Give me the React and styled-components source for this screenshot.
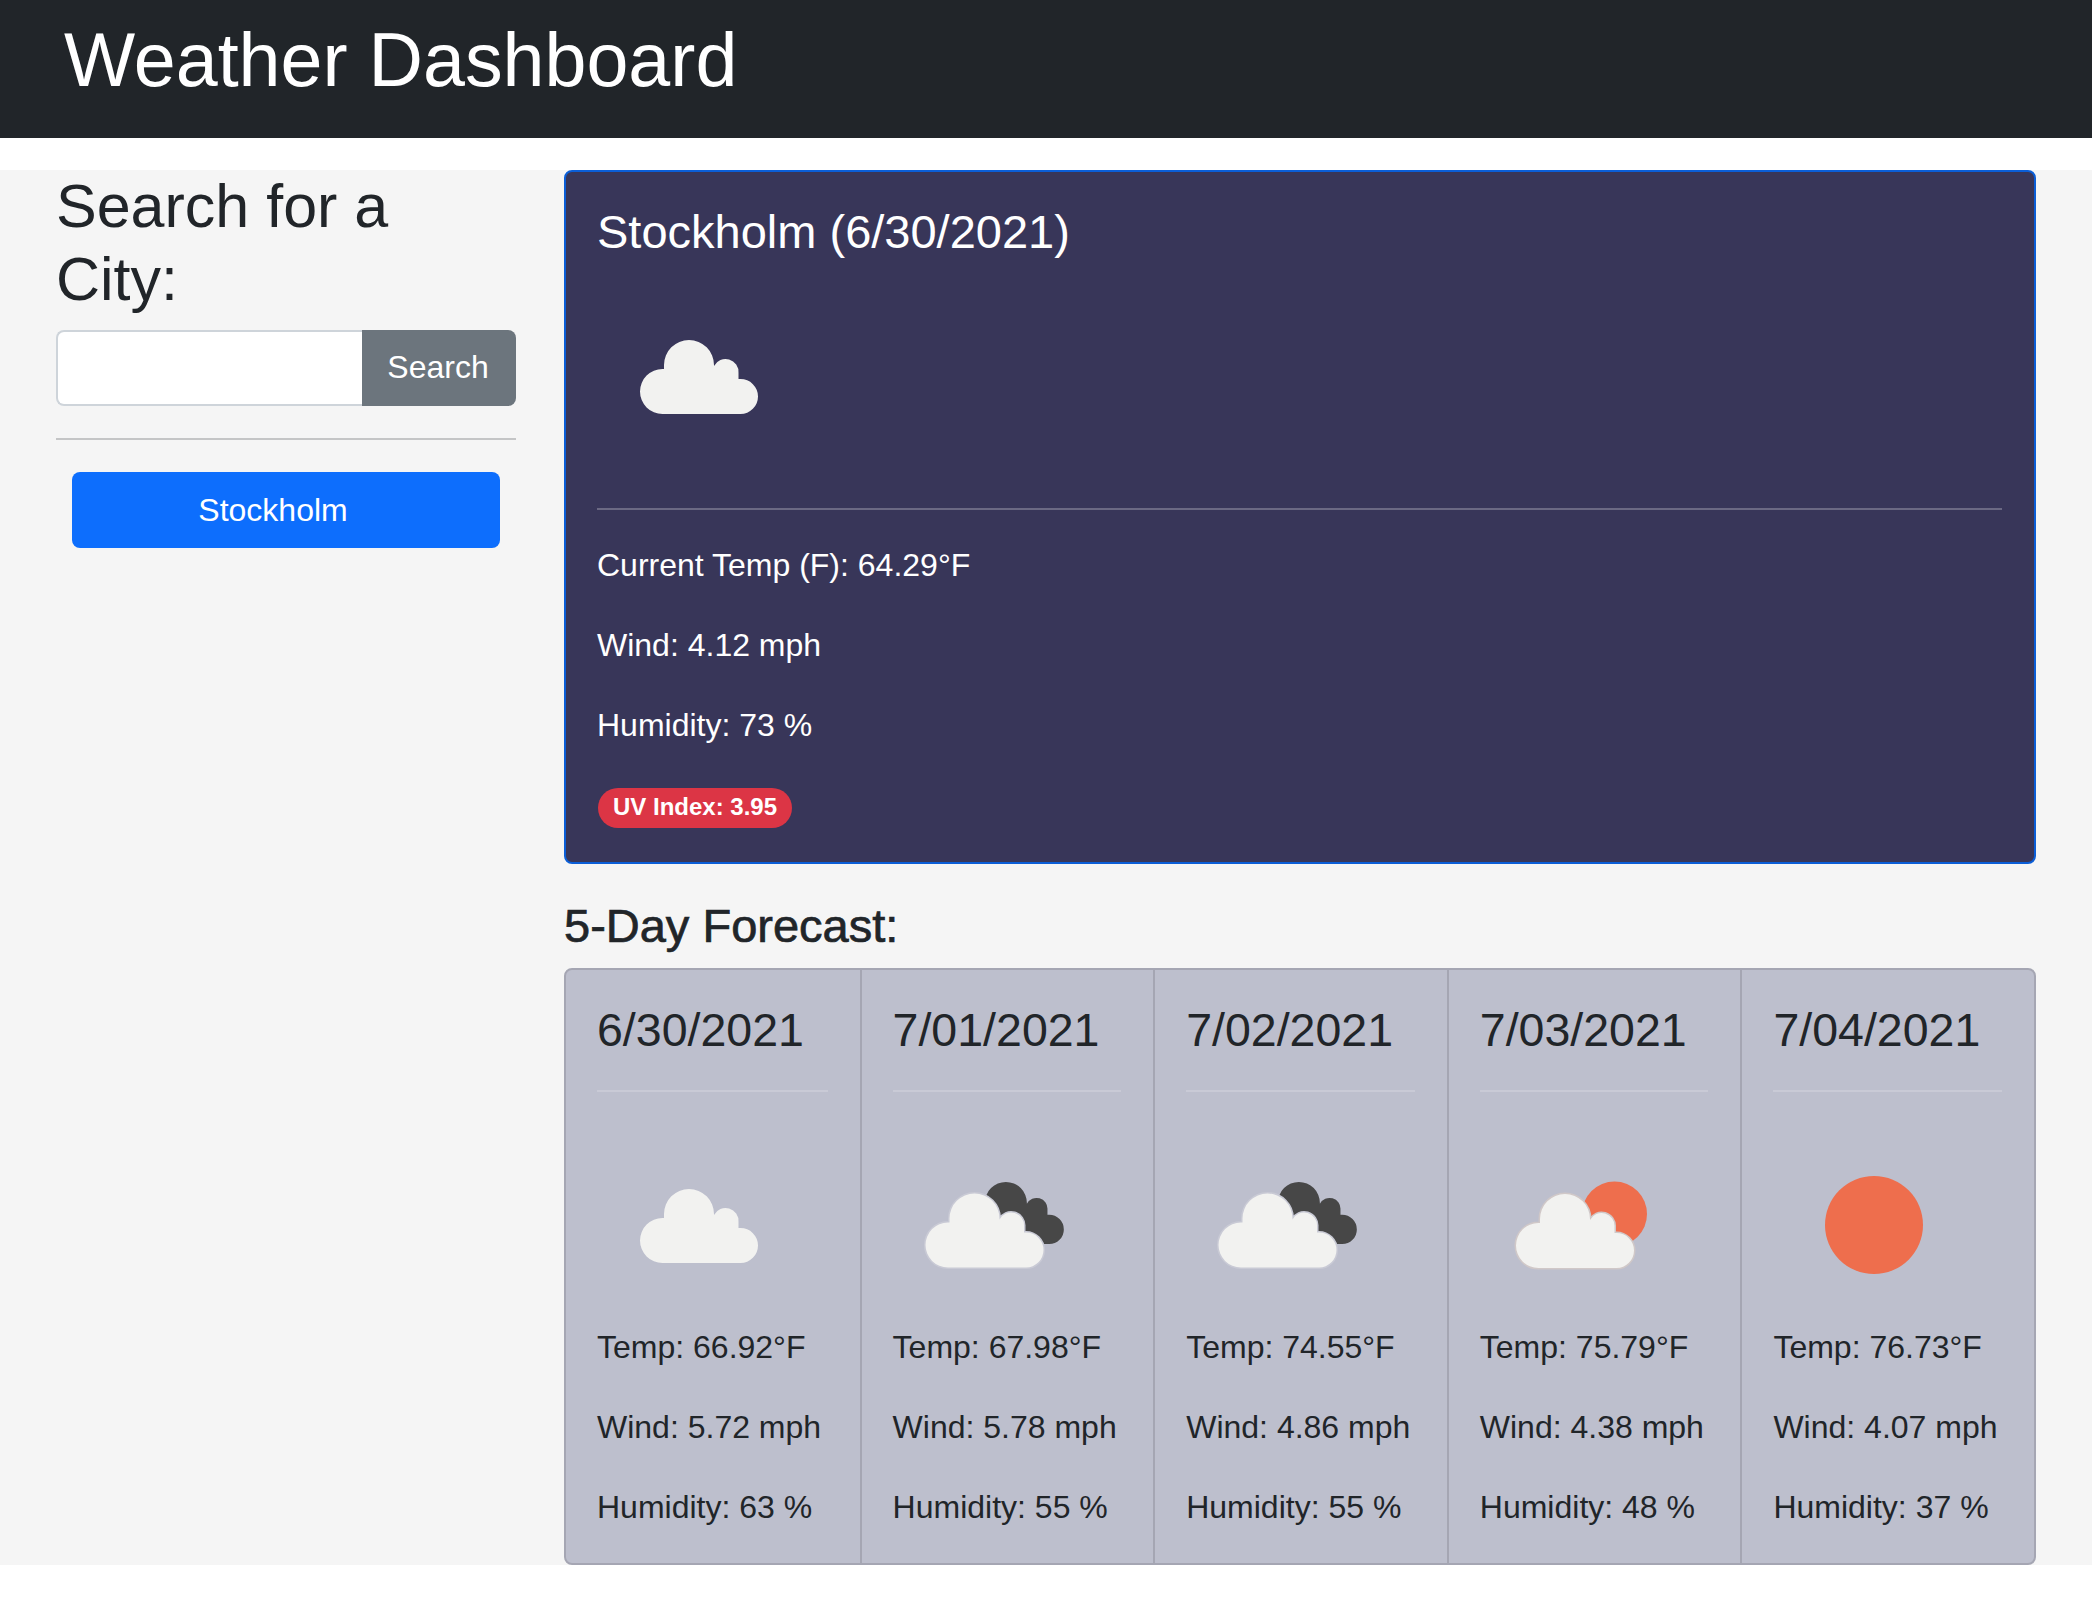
import React from "react";
import styled, { createGlobalStyle } from "styled-components";

const GlobalStyle = createGlobalStyle`
  * {
    box-sizing: border-box;
  }
  body {
    margin: 0;
    background: #fff;
    color: #212529;
    font-family: "Liberation Sans", Arial, sans-serif;
    font-size: 32px;
    line-height: 48px;
  }
`;

const Header = styled.header`
  height: 138px;
  padding: 15px 0 0 64px;
  background: #212529;
`;

const Title = styled.h1`
  margin: 0;
  color: #fff;
  font-size: 75.4px;
  font-weight: 400;
  line-height: 90.5px;
`;

const Page = styled.main`
  display: grid;
  grid-template-columns: 460px 1fr;
  column-gap: 48px;
  margin-top: 32px;
  padding: 0 56px;
  background: #f5f5f5;
`;

const Sidebar = styled.aside`
  display: flex;
  flex-direction: column;
`;

const SearchTitle = styled.h2`
  margin: 0 0 13px;
  font-size: 61px;
  font-weight: 400;
  line-height: 73.4px;
`;

const SearchGroup = styled.form`
  display: flex;
  height: 76px;
`;

const SearchInput = styled.input`
  flex: 1;
  min-width: 0;
  border: 2px solid #ced4da;
  border-right: 0;
  border-radius: 8px 0 0 8px;
  background: #fff;
  font: inherit;
`;

const SearchButton = styled.button`
  width: 154px;
  padding: 0 2px 2px 0;
  border: 0;
  border-radius: 0 8px 8px 0;
  background: #6c757d;
  color: #fff;
  font: inherit;
`;

const Rule = styled.hr`
  height: 2px;
  margin: ${(p) => p.$margin};
  border: 0;
  background: ${(p) => p.$color};
`;

const CityButton = styled.button`
  height: 76px;
  margin: 0 16px;
  padding: 1px 26px 0 0;
  border: 0;
  border-radius: 8px;
  background: #0d6efd;
  color: #fff;
  font: inherit;
`;

const Content = styled.section`
  min-width: 0;
`;

const CurrentCard = styled.article`
  height: 694px;
  padding: 32px 32px 32px 31px;
  border: 2px solid #0b5ed7;
  border-radius: 8px;
  background: #383659;
  color: #fff;
`;

const CardTitle = styled.h4`
  margin: 0 0 16px;
  font-size: 47px;
  font-weight: 400;
  line-height: 56.4px;
`;

const Text = styled.p`
  margin: 0 0 32px;
  white-space: nowrap;
`;

const Badge = styled.span`
  display: inline-block;
  height: 40px;
  margin: 7px 0 0 1px;
  padding: 0 15px;
  border-radius: 20px;
  background: #dc3545;
  color: #fff;
  font-size: 24px;
  font-weight: 700;
  line-height: 38px;
  vertical-align: top;
`;

const ForecastTitle = styled.h4`
  margin: 34px 0 14px;
  font-size: 47px;
  font-weight: 400;
  line-height: 56.4px;
  -webkit-text-stroke: 0.7px #212529;
`;

const ForecastGroup = styled.div`
  display: grid;
  grid-template-columns: repeat(5, 1fr);
  border: 2px solid #a5a6b3;
  border-radius: 8px;
  background: #bdbfcd;
`;

const DayCard = styled.article`
  min-width: 0;
  padding: 32px 32px 0 31px;
  & + & {
    border-left: 2px solid #a5a6b3;
  }
  svg {
    margin-bottom: -2px;
  }
  p:last-child {
    margin-bottom: 32px;
  }
`;

const DayTitle = styled.h4`
  margin: 0 0 31px;
  font-size: 46.5px;
  font-weight: 400;
  line-height: 56.4px;
`;

const IconBox = styled.svg`
  display: block;
  width: 200px;
  height: 200px;
`;

const CLOUD_PATH =
  "M65.5 138A22.5 22.5 0 0 1 65.5 93H67V89A25 25 0 0 1 117 89V90A13 13 0 0 1 141.5 97V103H143.5A17.5 17.5 0 0 1 143.5 138Z";
const CLOUD_WHITE = "#f2f2f0";

const Cloud = ({ fill, transform, edge }) => (
  <path
    d={CLOUD_PATH}
    fill={fill}
    transform={transform}
    stroke={edge}
    strokeWidth={edge ? 3 : 0}
    paintOrder="stroke"
  />
);

const WeatherIcon = ({ kind }) => (
  <IconBox viewBox="0 0 200 200">
    {kind === "clouds" && <Cloud fill={CLOUD_WHITE} />}
    {kind === "broken" && (
      <>
        <Cloud fill="#474747" transform="translate(35.6 3.2) scale(0.84)" />
        <Cloud fill={CLOUD_WHITE} transform="translate(-10.5 4.5)" edge="#c9cad5" />
      </>
    )}
    {kind === "few" && (
      <>
        <circle cx="134.5" cy="89" r="32.5" fill="#ee6e4d" />
        <Cloud fill={CLOUD_WHITE} transform="translate(-7 5)" edge="#d0c8c8" />
      </>
    )}
    {kind === "clear" && <circle cx="101" cy="100" r="49" fill="#ee6e4d" />}
  </IconBox>
);

const forecast = [
  { date: "6/30/2021", icon: "clouds", temp: "66.92", wind: "5.72", humidity: 63 },
  { date: "7/01/2021", icon: "broken", temp: "67.98", wind: "5.78", humidity: 55 },
  { date: "7/02/2021", icon: "broken", temp: "74.55", wind: "4.86", humidity: 55 },
  { date: "7/03/2021", icon: "few", temp: "75.79", wind: "4.38", humidity: 48 },
  { date: "7/04/2021", icon: "clear", temp: "76.73", wind: "4.07", humidity: 37 },
];

export default function App() {
  return (
    <>
      <GlobalStyle />
      <Header>
        <Title>Weather Dashboard</Title>
      </Header>
      <Page>
        <Sidebar>
          <SearchTitle>Search for a City:</SearchTitle>
          <SearchGroup onSubmit={(e) => e.preventDefault()}>
            <SearchInput type="text" />
            <SearchButton>Search</SearchButton>
          </SearchGroup>
          <Rule $margin="32px 0" $color="#c4c5c6" />
          <CityButton>Stockholm</CityButton>
        </Sidebar>
        <Content>
          <CurrentCard>
            <CardTitle>Stockholm (6/30/2021)</CardTitle>
            <WeatherIcon kind="clouds" />
            <Rule $margin="32px 0 31px" $color="#6b6983" />
            <Text>Current Temp (F): 64.29°F</Text>
            <Text>Wind: 4.12 mph</Text>
            <Text>Humidity: 73 %</Text>
            <Badge>UV Index: 3.95</Badge>
          </CurrentCard>
          <ForecastTitle>5-Day Forecast:</ForecastTitle>
          <ForecastGroup>
            {forecast.map((day) => (
              <DayCard key={day.date}>
                <DayTitle>{day.date}</DayTitle>
                <Rule $margin="0 0 33px" $color="#c9cad6" />
                <WeatherIcon kind={day.icon} />
                <Text>Temp: {day.temp}°F</Text>
                <Text>Wind: {day.wind} mph</Text>
                <Text>Humidity: {day.humidity} %</Text>
              </DayCard>
            ))}
          </ForecastGroup>
        </Content>
      </Page>
    </>
  );
}
